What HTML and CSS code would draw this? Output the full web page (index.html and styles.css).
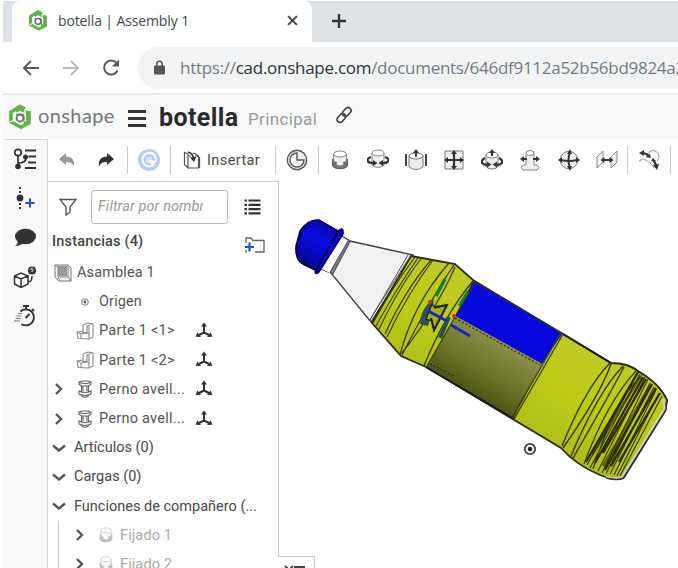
FILE: index.html
```html
<!DOCTYPE html>
<html lang="es">
<head>
<meta charset="utf-8">
<title>botella | Assembly 1</title>
<link rel="stylesheet" href="styles.css">
</head>
<body>
<svg class="defs" width="0" height="0">
  <symbol id="logo" viewBox="0 0 24 24">
    <path d="M3 15V7L12 1.500l5 2.500M8 6.500l4-2.500 8 4v9l-4 2" fill="none" stroke="#5fb548" stroke-width="3.600"/>
    <path d="M21 6v12l-8 4.300-10-5.500v-4" fill="none" stroke="#5fb548" stroke-width="3.600"/>
    <path d="M7 9.500l5-3 5 3v6l-5 3-5-3zM17 9V4M7 15l-5 2" fill="#fff" stroke="#fff" stroke-width="1.300"/>
    <path d="M8 9.500h7l1 2v6" fill="none" stroke="#66a95a" stroke-width="1.300"/>
    <circle cx="12" cy="13" r="3.500" fill="#fff" stroke="#666a70" stroke-width="1.800"/>
  </symbol>
  <symbol id="chev" viewBox="0 0 12 12"><path d="M3 1l5 5-5 5" fill="none" stroke="#555" stroke-width="2.400"/></symbol>
  <symbol id="chevd" viewBox="0 0 14 12"><path d="M1 3.500l6 5 6-5" fill="none" stroke="#555" stroke-width="2.400"/></symbol>
  <symbol id="part" viewBox="0 0 18 18"><path d="M1 10l6-1V3l5-2 5 1v13l-4 2-11-.5zM7 9v2l4-1V4l5-2M1 10l4 2v5M5 12l6-1 2 1v5M11 4l2 1v7" fill="none" stroke="#888" stroke-width="1.100"/></symbol>
  <symbol id="bolt" viewBox="0 0 18 18"><g fill="#f4f4f4" stroke="#666" stroke-width="1.100"><path d="M5.500 5v10c0 3 7 3 7 0V5z"/><path d="M3 2l3-1h6l3 1v2.500l-3 1.500H6L3 4.500z"/><path d="M3 11q6 3 12 0v3q-6 3-12 0z"/><path d="M3 2.500q6 2 12 0M7 6v5M11 6v5" fill="none"/></g></symbol>
  <symbol id="axes" viewBox="0 0 18 18"><path d="M9 10.500V3M9 10.500l-6 3M9 10.500l6 3" fill="none" stroke="#333" stroke-width="2"/><path d="M9 .5L12 4.500H6zM.5 14.800L2.500 10.500l3.500 4.500zM17.500 14.800L15.500 10.500 12 15z" fill="#333"/></symbol>
  <symbol id="fixed" viewBox="0 0 18 20"><path d="M1.500 9v6c0 5 15 5 15 0V9l-3 1v4h-9v-4z" fill="#777" stroke="#555"/><path d="M2.500 4v6c0 2 2 2 3 2v3q3.500 2 7 0v-3c1 0 3 0 3-2V4" fill="#eee" stroke="#888"/><ellipse cx="9" cy="4" rx="6.500" ry="3" fill="#fff" stroke="#888"/></symbol>
</svg>

<div class="window">
  <div class="tabs">
    <div class="tab">
      <svg class="favicon"><use href="#logo"/></svg>
      <span class="tab-title">botella | Assembly 1</span>
      <svg class="close" viewBox="0 0 10 10"><path d="M1 1l8 8M9 1L1 9" stroke="#444" stroke-width="1.800"/></svg>
    </div>
    <svg class="plus" viewBox="0 0 16 16"><path d="M8 1v14M1 8h14" stroke="#333" stroke-width="2.300"/></svg>
  </div>

  <div class="nav">
    <svg viewBox="0 0 18 18"><path d="M17 9H2M9 2L2 9l7 7" fill="none" stroke="#55595d" stroke-width="1.900"/></svg>
    <svg viewBox="0 0 18 18"><path d="M1 9h15M9 2l7 7-7 7" fill="none" stroke="#bbb" stroke-width="1.900"/></svg>
    <svg viewBox="0 0 18 18"><path d="M15.500 11.500a7 7 0 1 1-1-7.500" fill="none" stroke="#55595d" stroke-width="2"/><path d="M17 .5v7h-7z" fill="#55595d"/></svg>
    <div class="address">
      <svg viewBox="0 0 11 15"><path d="M2.800 6V4a2.700 2.700 0 0 1 5.400 0v2" fill="none" stroke="#555" stroke-width="1.500"/><rect y="5.500" width="11" height="9" rx="1" fill="#555"/></svg>
      <span class="url">https://<b>cad.onshape.com</b>/documents/646df9112a52b56bd9824a2</span>
    </div>
  </div>

  <header class="doc">
    <svg class="brand-mark"><use href="#logo"/></svg>
    <span class="brand">onshape</span>
    <span class="menu"><i></i><i></i><i></i></span>
    <span class="name">botella</span>
    <span class="branch">Principal</span>
    <svg class="link" viewBox="0 0 18 18"><g fill="none" stroke="#444" stroke-width="1.700" transform="rotate(-48 9 9)"><rect x="0" y="6" width="10" height="6" rx="3"/><rect x="8" y="6" width="10" height="6" rx="3"/></g></svg>
  </header>

  <div class="main">
    <aside class="rail">
      <svg viewBox="0 0 24 22"><g fill="none" stroke="#333" stroke-width="1.700"><circle cx="5" cy="4.500" r="3.200"/><path d="M5 8v8M5 15q8 0 8-5"/><path d="M12 2.500h11M15.500 8.500H23M15 14.500h8M12 20h11" stroke-width="2"/></g><circle cx="5" cy="18.500" r="2.800" fill="#333"/><circle cx="12.500" cy="9" r="2.500" fill="#333"/></svg>
      <svg viewBox="0 0 24 22"><path d="M7 0v22" stroke="#333" stroke-width="2" stroke-dasharray="2 2"/><circle cx="7" cy="11" r="3.400" fill="#333"/><path d="M17 11.500v9M12.500 16h9" stroke="#1c55b5" stroke-width="2"/></svg>
      <svg viewBox="0 0 24 22"><ellipse cx="12.500" cy="9.500" rx="10.500" ry="7.800" fill="#333"/><path d="M5 13q0 4-3 6 6 0 9-4z" fill="#333"/></svg>
      <svg viewBox="0 0 24 22"><g fill="none" stroke="#333" stroke-width="1.500"><path d="M1.500 10L8 7l7 3v8l-7 3.500-6.500-3.500zM1.500 10L8 13l7-3M8 13v8M15 16q4 0 4-6"/></g><circle cx="19" cy="4.500" r="4" fill="#333"/><path d="M17.800 4q0-2 1.500-1.500 1.500 1-.3 2.500v1" fill="none" stroke="#fff"/></svg>
      <svg viewBox="0 0 24 22"><g fill="none" stroke="#333" stroke-width="1.900"><path d="M7.500 6.500a8 8 0 1 1 1 12.500"/><path d="M10 1h6M13 1v3M19 4l2 2M12.500 13l4-4"/><path d="M5 8.500h4M3.500 11h5M2.500 13.500h5M1 16h6" stroke="#777" stroke-width="1.200"/></g></svg>
    </aside>

    <div class="work">
      <div class="toolbar">
        <svg class="t-undo" viewBox="0 0 16 16"><path d="M0 7l7-6v3.500c6 0 9 4 8 10.500-1-4-4-5-8-5V13z" fill="#999"/></svg>
        <svg class="t-redo" viewBox="0 0 16 16"><path d="M16 7L9 1v3.500C3 4.500 0 8.500 1 15c1-4 4-5 8-5V13z" fill="#333"/></svg>
        <i class="sep"></i>
        <svg class="t-refresh" viewBox="0 0 22 22"><circle cx="11" cy="11" r="11" fill="#b7cee8"/><path d="M14.500 16.500a6.800 6.800 0 1 1 3.200-4" fill="none" stroke="#fff" stroke-width="2"/><circle cx="11" cy="11" r="3.500" fill="#d5e3f3"/><path d="M11 11l7 1-3 6z" fill="#fff"/></svg>
        <i class="sep"></i>
        <svg class="t-insert" viewBox="0 0 18 18"><g fill="none" stroke="#555" stroke-width="1.200"><path d="M5 3L1.500 1.500v12L5 17zM5 17h10.500V5H12M5 3v2h3M15.500 5L12 2.500h-2M16.500 6v11"/><path d="M5 1q5 1 5.500 7" stroke="#333" stroke-width="1.700"/></g><path d="M7 6.500l6.500-1L11 11z" fill="#333"/></svg>
        <span class="insert">Insertar</span>
        <i class="sep"></i>
        <svg class="tool" viewBox="0 0 22 22"><circle cx="11" cy="11" r="9.700" fill="#eee" stroke="#555" stroke-width="1.400"/><path d="M11 4a7 7 0 1 0 7 7h-7z" fill="#fff" stroke="#555" stroke-width="1.400"/></svg>
        <i class="sep"></i>
        <div class="mates">
          <svg class="tool" viewBox="-2 -1 22 22"><use href="#fixed" width="18" height="20"/></svg>
          <svg class="tool" viewBox="0 0 22 22"><path d="M5 4v12q6 5 12 0V4" fill="#eee" stroke="#888"/><ellipse cx="11" cy="4" rx="6" ry="3" fill="#fff" stroke="#888"/><path d="M4 8C-2 10 0 15 8 14M18 8c6 2 4 7-4 6" fill="none" stroke="#333" stroke-width="2.200"/><path d="M6 11l4.500 3L6 17zM16 11l-4.500 3 4.500 3z" fill="#333"/></svg>
          <svg class="tool" viewBox="0 0 22 22"><path d="M4 7v11q7 5 14 0V7" fill="#eee" stroke="#777"/><ellipse cx="11" cy="7" rx="7" ry="3" fill="#fff" stroke="#777"/><path d="M11 8V3M1 5v12M21 5v12" stroke="#333" stroke-width="1.800"/><path d="M11 0l3 4H8z" fill="#333"/></svg>
          <svg class="tool" viewBox="0 0 22 22"><path d="M2 2h18v18H2z" fill="#eee" stroke="#777"/><path d="M11 4v14M4 11h14" stroke="#333" stroke-width="2.200"/><path d="M11 1l3 4H8zM11 21l3-4H8zM1 11l4-3v6zM21 11l-4-3v6z" fill="#333"/></svg>
          <svg class="tool" viewBox="0 0 22 22"><path d="M5 6v12q6 4 12 0V6" fill="#eee" stroke="#777"/><ellipse cx="11" cy="6" rx="6" ry="3" fill="#fff" stroke="#777"/><path d="M4 9c-6 3-3 8 4 6.500M18 9c6 3 3 8-4 6.500M11 7V3" fill="none" stroke="#333" stroke-width="2.200"/><path d="M11 0l3 4H8zM6 12.500l4.500 3-4.500 3zM16 12.500l-4.500 3 4.500 3z" fill="#333"/></svg>
          <svg class="tool" viewBox="0 0 22 22"><path d="M7 4v12H4l-2 2.500L4 21h14l2-2.500-2-2.500h-3V4" fill="#eee" stroke="#888"/><ellipse cx="11" cy="4" rx="4" ry="2.500" fill="#fff" stroke="#888"/><path d="M3 10h5M14 10h5" stroke="#333" stroke-width="2"/><path d="M1 10l4-3v6zM21 10l-4-3v6z" fill="#333"/></svg>
          <svg class="tool" viewBox="0 0 22 22"><circle cx="11" cy="11" r="8.700" fill="#eee" stroke="#777"/><path d="M12 3q-3 8 0 16M3 11q8 2 16 0" fill="none" stroke="#333" stroke-width="2"/><path d="M12 0l2 5H9zM12 22l2-5H9zM0 11l4-3v6zM22 11l-4-3v6z" fill="#333"/></svg>
          <svg class="tool" viewBox="0 0 22 22"><path d="M1 19V8l6-6v11zM15 19V8l6-6v11z" fill="#f2f2f2" stroke="#888"/><path d="M7 11h8" stroke="#333" stroke-width="2"/><path d="M4.500 11l4-3v6zM17.500 11l-4-3v6z" fill="#333"/></svg>
        </div>
        <i class="sep"></i>
        <svg class="tool" viewBox="0 0 22 22"><path d="M1 12l4-2q7 2 11 9M9 9a6 6 0 1 1 10 3" fill="none" stroke="#999"/><path d="M4 4q4 0 7 3M15 11q3 3 3 7" fill="none" stroke="#333" stroke-width="2.200"/><path d="M1 4l5-3v6zM15 16l6-1-2 6zM8 8l4-3 1 4zM13 12l2-3 3 3z" fill="#333"/></svg>
        <i class="sep"></i>
      </div>

      <div class="body">
        <div class="panel">
          <div class="filter">
            <svg class="funnel" viewBox="0 0 18 18"><path d="M1 1.500h16L11 9v5l-4 3V9z" fill="none" stroke="#555" stroke-width="1.400"/></svg>
            <div class="field"><span>Filtrar por nombr</span></div>
            <svg class="list" viewBox="0 0 16 16"><path d="M4 1.500h12M4 5.800h12M4 10.100h12M4 14.400h12" stroke="#333" stroke-width="2.200"/><path d="M0 1.500h2.500M0 5.800h2.500M0 10.100h2.500M0 14.400h2.500" stroke="#333" stroke-width="2.200"/></svg>
          </div>
          <div class="instances">
            <span>Instancias (4)</span>
            <svg viewBox="0 0 21 16"><path d="M2 6V1h5l2 2.500h11V15h-9M2 13v2h1" fill="none" stroke="#666" stroke-width="1.300"/><path d="M5.500 5.500v9M1 10h9" stroke="#1c55b5" stroke-width="2.200"/></svg>
          </div>
          <div class="row asm"><svg class="i18" viewBox="0 0 18 18"><path d="M1 1h13l3 3v13H5l-4-4z" fill="#f4f4f4" stroke="#777"/><path d="M4 2h9v10H4z" fill="#999"/><path d="M1 1l3 2v10l2 4M14 1v12H4M14 13l3 4" fill="none" stroke="#888"/></svg><span>Asamblea 1</span></div>
          <div class="row origin"><svg class="i8" viewBox="0 0 8 8"><circle cx="4" cy="4" r="3.300" fill="#fff" stroke="#777"/><circle cx="4" cy="4" r="1.400" fill="#555"/></svg><span>Origen</span></div>
          <div class="row leaf"><i class="chv"></i><svg class="i18"><use href="#part"/></svg><span class="lab">Parte 1 &lt;1&gt;</span><svg class="i18"><use href="#axes"/></svg></div>
          <div class="row leaf"><i class="chv"></i><svg class="i18"><use href="#part"/></svg><span class="lab">Parte 1 &lt;2&gt;</span><svg class="i18"><use href="#axes"/></svg></div>
          <div class="row leaf"><svg class="chv"><use href="#chev"/></svg><svg class="i18"><use href="#bolt"/></svg><span class="lab">Perno avell...</span><svg class="i18"><use href="#axes"/></svg></div>
          <div class="row leaf"><svg class="chv"><use href="#chev"/></svg><svg class="i18"><use href="#bolt"/></svg><span class="lab">Perno avell...</span><svg class="i18"><use href="#axes"/></svg></div>
          <div class="row group"><svg class="chd"><use href="#chevd"/></svg><span>Artículos (0)</span></div>
          <div class="row group"><svg class="chd"><use href="#chevd"/></svg><span>Cargas (0)</span></div>
          <div class="row group"><svg class="chd"><use href="#chevd"/></svg><span class="fn">Funciones de compañero (...</span></div>
          <div class="children">
            <div class="row"><svg class="chv"><use href="#chev"/></svg><svg class="i16"><use href="#fixed"/></svg><span>Fijado 1</span></div>
            <div class="row"><svg class="chv"><use href="#chev"/></svg><svg class="i16"><use href="#fixed"/></svg><span>Fijado 2</span></div>
          </div>
        </div>

        <div class="canvas">
          <svg class="model" viewBox="279 181 399 387">
            <defs>
              <linearGradient id="cap" gradientUnits="userSpaceOnUse" x1="330" y1="226" x2="305" y2="268"><stop offset="0" stop-color="#0808a8"/><stop offset=".35" stop-color="#0a0ae0"/><stop offset=".75" stop-color="#0808b4"/><stop offset="1" stop-color="#04045c"/></linearGradient>
              <linearGradient id="olive" gradientUnits="userSpaceOnUse" x1="500" y1="340" x2="468" y2="394"><stop offset="0" stop-color="#8b8f48"/><stop offset=".5" stop-color="#6f762c"/><stop offset="1" stop-color="#4a5210"/></linearGradient>
              <linearGradient id="lime" gradientUnits="userSpaceOnUse" x1="560" y1="332" x2="513" y2="420"><stop offset="0" stop-color="#c0ca28"/><stop offset=".5" stop-color="#bdcb14"/><stop offset="1" stop-color="#b0bf1c"/></linearGradient>
            </defs>
            <path d="M342 236L350 241 413 255 371 322 331 273 319 268z" fill="#f1f1f3" stroke="#444" stroke-width="1.400"/>
            <path d="M342 237L348 241 330 273 320 268z" fill="#fff"/>
            <path d="M348 241L350 242 333 274 330 272z" fill="#777" stroke="#555"/>
            <path d="M296 246L300 231Q308 219 319 220L338 231Q344 226 343 234L319 272Q315 276 315 270L303 264Q295 260 296 246z" fill="url(#cap)" stroke="#050560" stroke-width="1.500"/>
            <path d="M338 232L316 270M309 222Q296 236 297 254" fill="none" stroke="#03034a" stroke-width="1.500"/>
            <path d="M411 256L455 264 473 280 563 334 611 363Q628 363 638 371 660 384 667 400L665 411 624 476Q618 482 600 475 576 465 561 448L426 367 401 356 372 323z" fill="url(#lime)" stroke="#292c0c" stroke-width="1.800"/>
            <path d="M473 281L562 334 542 364 455 316z" fill="#0808dc"/>
            <path d="M455 316L542 364 514 419 427 367z" fill="url(#olive)"/>
            <path d="M562 334L542 364 514 419 519 408 560 337z" fill="#b7c51a"/>
            <path d="M563 334L611 363M426 367L514 419" stroke="#161a25" stroke-width="2"/>
            <g fill="none" stroke="#3a3f08" stroke-width="1.200">
              <path d="M415 257Q390 291 373 323M418 258Q398 286 376 326M421 259Q401 284 379 329M431 260Q405 290 385 334M433 260Q408 293 387 337"/>
              <path d="M449 263Q413 304 400 355M454 265Q430 300 402 355M455 267Q438 307 402 353" stroke-width="1.300"/>
              <path d="M473 281Q445 314 424 366M475 282L427 366M563 334L514 419M560 334L518 407L512 418" stroke-width="1.400"/>
              <path d="M610 363Q586 387 562 446M611 364Q600 395 563 448M623 366Q598 392 571 456M624 367Q606 401 573 458" stroke-width="1.500"/>
              <path d="M636 371Q607 402 584 464M638 373L587 465M640 374L590 468M642 375Q615 400 593 469M645 377L598 471M648 379L602 473M650 383L606 474M654 387L610 474M656 390L614 475M659 393L617 476M662 396L620 476"/>
              <path d="M638 372L586 462M643 377L595 463M646 379L603 453M652 384L605 470M656 388L611 466M660 393L619 462" stroke="#292d04" stroke-width="2.300"/>
            </g>
            <path d="M640 377L592 455M650 386L603 466M637 410L606 464" stroke="#292d04" stroke-width="3" opacity=".6"/>
            <path d="M663 399L665 408 622 477Q614 480 606 477" fill="none" stroke="#d0d0d0" stroke-width="2"/>
            <path d="M638 371Q660 384 667 400L666 410 624 478Q618 481 606 478" fill="none" stroke="#333" stroke-width="1.400"/>
            <path d="M411 255L369 321M408 255L370 320" stroke="#555" fill="none"/>
            <path d="M434 299Q421 307 420 324L428 326 432 312z" fill="#2f5358"/>
            <path d="M445 279l-9 17" stroke="#168326" stroke-width="3.500"/>
            <path d="M468 291l-9 15" stroke="#168326" stroke-width="2.500"/>
            <path d="M449 317L440 338" stroke="#275047" stroke-width="4"/>
            <path d="M426 319L432 304 435 308 447 305 434 331 432 321z" fill="#a6ae19" stroke="#1b210e" stroke-width="1.200"/>
            <path d="M435 307L447 305 434 330 431 318" fill="none" stroke="#1b210e" stroke-width="2"/>
            <path d="M428 311L447 321M451 325L470 336" stroke="#1725c5" stroke-width="3"/>
            <circle cx="430" cy="302" r="2" fill="#ce3527"/><circle cx="454" cy="316" r="2" fill="#ce3527"/>
            <path d="M455 318L540 365M430 364L454 376" stroke="#252a17" stroke-width="1.200" stroke-dasharray="2 2"/>
            <circle cx="530" cy="449" r="5.200" fill="#eee" stroke="#444" stroke-width="1.800"/><circle cx="530" cy="449" r="2.200" fill="#222"/>
          </svg>
          <div class="corner"><svg viewBox="0 0 22 12"><path d="M1 2l4 4 4-4M10 3h11M10 7h11" fill="none" stroke="#444" stroke-width="2"/></svg></div>
        </div>
      </div>
    </div>
  </div>
</div>
</body>
</html>
```
FILE: styles.css
```css
* { box-sizing: border-box; }
body { margin: 0; background: #fff; overflow: hidden; font-family: Roboto, "Liberation Sans", sans-serif; color: #444; }
svg { display: block; flex: none; }
.defs { position: absolute; }
.window { width: 678px; height: 568px; padding: 1px 0 0 3px; display: flex; flex-direction: column; overflow: hidden; }
span { white-space: nowrap; }

.tabs { height: 41px; flex: none; display: flex; align-items: center; background: #dee1e6; padding-left: 9px; }
.tab { width: 300px; height: 41px; background: #fff; border-radius: 8px 8px 0 0; display: flex; align-items: center; padding: 0 14px 2px 16px; }
.favicon { width: 20px; height: 21px; }
.tab-title { font: 14px "Open Sans", sans-serif; color: #45494d; margin-left: 10px; flex: 1; letter-spacing: -.12px; }
.close { width: 11px; height: 11px; }
.plus { width: 16px; height: 16px; margin: 0 0 2px 19px; }

.nav { height: 51px; flex: none; display: flex; align-items: center; padding-left: 19px; gap: 22px; }
.nav > svg { width: 18px; height: 18px; }
.address { flex: 1; min-width: 0; height: 42px; margin-left: -4px; background: #f1f3f4; border-radius: 21px 0 0 21px; display: flex; align-items: center; padding-left: 16px; overflow: hidden; }
.address svg { width: 11px; height: 15px; }
.url { font: 17px "Open Sans", sans-serif; color: #777b80; margin-left: 15px; letter-spacing: -.28px; }
.url b { font-weight: 400; color: #303338; }

.doc { height: 46px; flex: none; background: #f8f9fb; border-top: 2px solid #e8e9eb; display: flex; align-items: center; padding-left: 5px; }
.brand-mark { width: 24px; height: 26px; }
.brand { font: 20px Lato, sans-serif; color: #777; margin: -4px 0 0 6px; width: 76px; letter-spacing: .4px; }
.menu { width: 18px; margin-left: 14px; display: flex; flex-direction: column; gap: 4px; margin-top: 2px; }
.menu i { height: 3px; background: #333; }
.name { font-size: 25px; font-weight: 700; color: #2b2b2b; margin-left: 13px; width: 79px; letter-spacing: .4px; }
.branch { font-size: 17px; color: #999; margin: 4px 0 0 10px; width: 70px; letter-spacing: .35px; }
.link { width: 18px; height: 18px; margin: -4px 0 0 17px; }

.main { flex: 1; display: flex; min-height: 0; }
.rail { width: 45px; background: #f9f9f9; border-right: 1px solid #d6d6d6; border-top: 1px solid #ddd; display: flex; flex-direction: column; align-items: center; gap: 17.300px; padding-top: 8px; }
.rail svg { width: 24px; height: 22px; }
.work { flex: 1; min-width: 0; display: flex; flex-direction: column; }
.toolbar { height: 42px; flex: none; display: flex; align-items: center; padding-left: 11px; }
.sep { width: 1px; height: 28px; background: #ccc; flex: none; }
.t-undo, .t-redo { width: 16px; height: 16px; }
.t-redo { margin: 0 13px 0 23px; }
.t-refresh { width: 22px; height: 22px; margin: 0 10px; }
.t-insert { width: 18px; height: 18px; margin-left: 12px; }
.insert { font-size: 14.500px; width: 55px; margin: 0 13px 0 6px; letter-spacing: .4px; color: #484848; }
.tool { width: 22px; height: 22px; margin: 0 10px; }
.mates { display: flex; gap: 16.100px; padding: 0 9px 0 10px; }
.mates .tool { margin: 0; }

.body { flex: 1; min-height: 0; display: flex; }
.panel { width: 231px; border-right: 1px solid #ccc; border-top: 1px solid #ccc; font-size: 14.500px; overflow: hidden; }
.filter { height: 47px; display: flex; align-items: center; padding: 2px 0 0 11px; }
.funnel { width: 18px; height: 18px; }
.field { width: 137px; height: 34px; margin: 0 16px 0 14px; border: 1px solid #bbb; border-radius: 3px; display: flex; align-items: center; padding: 0 24px 0 6px; color: #999; font-style: italic; }
.field span { overflow: hidden; width: 106px; letter-spacing: .1px; }
.list { width: 17px; height: 16px; }
.instances { height: 29px; display: flex; align-items: center; justify-content: space-between; padding: 0 13px 4px 4px; font-weight: 500; letter-spacing: .18px; }
.instances svg { width: 21px; height: 16px; margin-top: 6px; }
.row { height: 29.200px; display: flex; align-items: center; color: #555; letter-spacing: .12px; }
.i18 { width: 18px; height: 18px; }
.i16 { width: 14px; height: 18px; }
.i8 { width: 8px; height: 8px; }
.asm { padding-left: 6px; gap: 5px; }
.origin { padding-left: 33px; gap: 10px; }
.leaf { padding-left: 5px; }
.chv { width: 12px; height: 12px; margin-right: 11px; flex: none; }
.lab { width: 87px; margin: 0 9px 0 5px; letter-spacing: .25px; }
.group { padding-left: 4px; gap: 8px; color: #484848; letter-spacing: 0; }
.chd { width: 14px; height: 12px; }
.children { margin-left: 10px; border-left: 1px solid #ccc; padding-left: 15px; }
.children .row { color: #aaa; }
.children .chv { margin-right: 13px; }
.children .i16 { opacity: .45; margin-right: 7px; }
.canvas { flex: 1; position: relative; }
.model { width: 399px; height: 387px; }
.corner { position: absolute; left: -1px; bottom: 0; width: 37px; height: 12px; background: #fff; border: 1px solid #ccc; border-width: 1px 1px 0 0; padding: 7px 0 0 6px; overflow: hidden; }
.corner svg { width: 22px; height: 12px; }
```
